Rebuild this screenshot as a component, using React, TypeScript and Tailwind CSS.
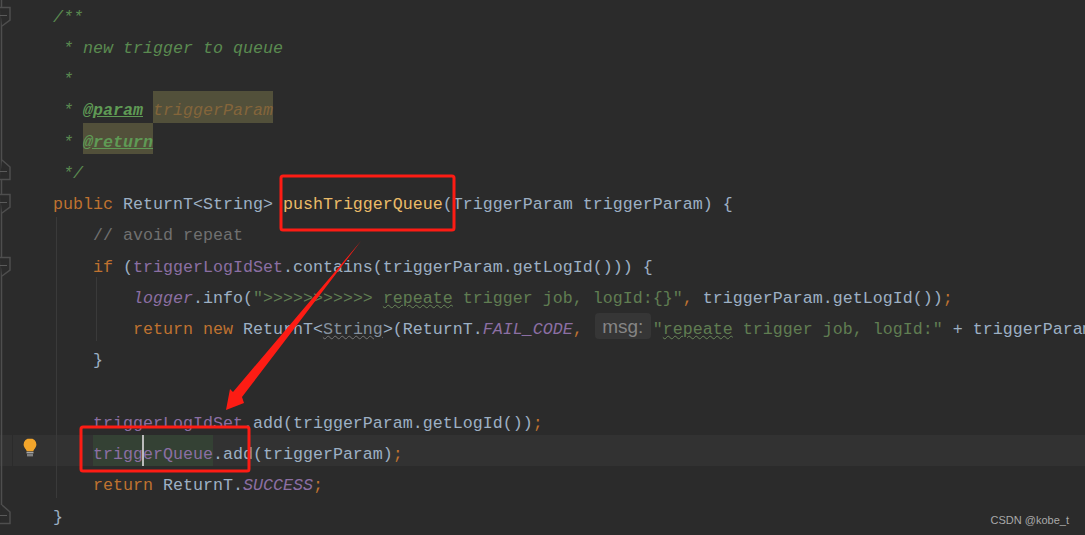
import React from "react";

const C = {
  text: "text-[#9db0c4]",
  kw: "text-[#bf7230]",
  cm: "text-[#707070]",
  doc: "text-[#5a8a50]",
  str: "text-[#607d52]",
  fld: "text-[#8b6fa3]",
  fn: "text-[#eabb68]",
};

function S({ c, i, children }: { c: string; i?: boolean; children: React.ReactNode }) {
  return <span className={`${c} ${i ? "italic" : ""}`}>{children}</span>;
}

function Row({ children, active }: { children?: React.ReactNode; active?: boolean }) {
  return (
    <div className={`h-[31.25px] leading-[40px] pl-[53px] whitespace-pre ${active ? "bg-[#323232]" : ""}`}>
      {children}
    </div>
  );
}

function Mark({ children }: { children: React.ReactNode }) {
  return <span className="inline-block h-[31.25px] align-top bg-[#52503a]">{children}</span>;
}

export default function App() {
  return (
    <div className="relative w-[1085px] h-[535px] overflow-hidden bg-[#2b2b2b] text-[16.67px] font-['Liberation_Mono',monospace] flex">
      <div className="w-full -mt-[2.5px] shrink-0">
        <Row><S c={C.doc} i>/**</S></Row>
        <Row><S c={C.doc} i> * new trigger to queue</S></Row>
        <Row><S c={C.doc} i> *</S></Row>
        <Row>
          <S c={C.doc} i> * </S>
          <span className="text-[#5f9a55] italic font-bold underline">@param</span>
          <span> </span>
          <Mark><S c="text-[#84653a]" i>triggerParam</S></Mark>
        </Row>
        <Row>
          <S c={C.doc} i> * </S>
          <Mark><span className="text-[#5f9a55] italic font-bold underline">@return</span></Mark>
        </Row>
        <Row><S c={C.doc} i> */</S></Row>
        <Row>
          <S c={C.kw}>public </S>
          <S c={C.text}>ReturnT&lt;String&gt; </S>
          <S c={C.fn}>pushTriggerQueue</S>
          <S c={C.text}>(TriggerParam triggerParam) {"{"}</S>
        </Row>
        <Row><S c={C.cm}>    // avoid repeat</S></Row>
        <Row>
          <S c={C.kw}>    if </S>
          <S c={C.text}>(</S>
          <S c={C.fld}>triggerLogIdSet</S>
          <S c={C.text}>.contains(triggerParam.getLogId())) {"{"}</S>
        </Row>
        <Row>
          <S c={C.fld} i>        logger</S>
          <S c={C.text}>.info(</S>
          <S c={C.str}>"&gt;&gt;&gt;&gt;&gt;&gt;&gt;&gt;&gt;&gt;&gt; </S>
          <span className="text-[#607d52] underline decoration-wavy decoration-1 decoration-[#6a8759]">repeate</span>
          <S c={C.str}> trigger job, logId:{"{}"}"</S>
          <S c={C.kw}>, </S>
          <S c={C.text}>triggerParam.getLogId())</S>
          <S c={C.kw}>;</S>
        </Row>
        <Row>
          <S c={C.kw}>        return new </S>
          <S c={C.text}>ReturnT&lt;</S>
          <span className="text-[#85919e] underline decoration-wavy decoration-1 decoration-[#777777]">String</span>
          <S c={C.text}>&gt;(ReturnT.</S>
          <S c={C.fld} i>FAIL_CODE</S>
          <S c={C.kw}>,</S>
          <span className="inline-flex items-center justify-center align-top w-[56px] h-[26px] mt-[3px] ml-[12px] mr-[2px] rounded-[4px] bg-[#363636] text-[#858585] text-[19px] leading-none font-['Liberation_Sans',sans-serif]">msg:</span>
          <S c={C.str}>"</S>
          <span className="text-[#607d52] underline decoration-wavy decoration-1 decoration-[#6a8759]">repeate</span>
          <S c={C.str}> trigger job, logId:"</S>
          <S c={C.text}> + triggerParam.getLogId());</S>
        </Row>
        <Row><S c={C.text}>    {"}"}</S></Row>
        <Row />
        <Row>
          <S c={C.fld}>    triggerLogIdSet</S>
          <S c={C.text}>.add(triggerParam.getLogId())</S>
          <S c={C.kw}>;</S>
        </Row>
        <Row active>
          <span>    </span>
          <span className="inline-block h-[31.25px] align-top bg-[#344134] text-[#8b6fa3]">triggerQueue</span>
          <S c={C.text}>.add(triggerParam)</S>
          <S c={C.kw}>;</S>
        </Row>
        <Row>
          <S c={C.kw}>    return </S>
          <S c={C.text}>ReturnT.</S>
          <S c={C.fld} i>SUCCESS</S>
          <S c={C.kw}>;</S>
        </Row>
        <Row><S c={C.text}>{"}"}</S></Row>
      </div>

      {/* gutter, guides, annotations */}
      <svg className="absolute left-0 top-0 pointer-events-none" width="1085" height="535" viewBox="0 0 1085 535" fill="none">
        <line x1="1.5" y1="0" x2="1.5" y2="505" stroke="#4e4e4e" strokeWidth="1.5" />
        <line x1="12.5" y1="435" x2="12.5" y2="466" stroke="#2b2b2b" />
        <path d="M0 7.5H10V20L2 26" stroke="#4e4e4e" strokeWidth="1.5" fill="#2b2b2b" />
        <line x1="0" x2="7" y1="15.5" y2="15.5" stroke="#5a5a5a" />
        <path d="M2 160L10 167V179.5H0" stroke="#4e4e4e" strokeWidth="1.5" fill="#2b2b2b" />
        <line x1="0" x2="7" y1="171.5" y2="171.5" stroke="#5a5a5a" />
        <path d="M0 194.5H10V207L2 213" stroke="#4e4e4e" strokeWidth="1.5" fill="#2b2b2b" />
        <line x1="0" x2="7" y1="202.5" y2="202.5" stroke="#5a5a5a" />
        <path d="M0 257.5H10V270L2 276" stroke="#4e4e4e" strokeWidth="1.5" fill="#2b2b2b" />
        <line x1="0" x2="7" y1="265.5" y2="265.5" stroke="#5a5a5a" />
        <path d="M2 505L10 512V523.5H0" stroke="#4e4e4e" strokeWidth="1.5" fill="#2b2b2b" />
        <line x1="0" x2="7" y1="515.5" y2="515.5" stroke="#5a5a5a" />
        <line x1="56.5" y1="217" x2="56.5" y2="498" stroke="#3a3a3a" />
        <line x1="96.5" y1="277" x2="96.5" y2="341" stroke="#3a3a3a" />
        {/* lightbulb */}
        <path d="M30 438.2a6.4 6.4 0 0 0-6.4 6.4c0 2.4 1.3 3.6 2.3 4.9.5.7.7 1.2.8 1.7h6.6c.1-.5.3-1 .8-1.7 1-1.3 2.3-2.5 2.3-4.9a6.4 6.4 0 0 0-6.4-6.4z" fill="#f2a52b" />
        <rect x="26.5" y="451.8" width="7" height="1.6" fill="#a8a8a8" />
        <rect x="27" y="454" width="6" height="2.4" fill="#808080" />
        {/* caret */}
        <rect x="142" y="435" width="2" height="31" fill="#bbbbbb" />
        {/* annotations */}
        <rect x="281" y="176" width="173" height="54" rx="2" stroke="#fd1c14" strokeWidth="3" />
        <rect x="81" y="427" width="168" height="44" rx="2" stroke="#fd1c14" strokeWidth="3" />
        <path d="M361 241L242 397L244 403L226 410L230 389L233 392Z" fill="#fd1c14" />
      </svg>

      <span className="absolute right-[16px] bottom-[9px] text-[11px] leading-none text-[#a9a9a9] font-['Liberation_Sans',sans-serif]">CSDN @kobe_t</span>
    </div>
  );
}
